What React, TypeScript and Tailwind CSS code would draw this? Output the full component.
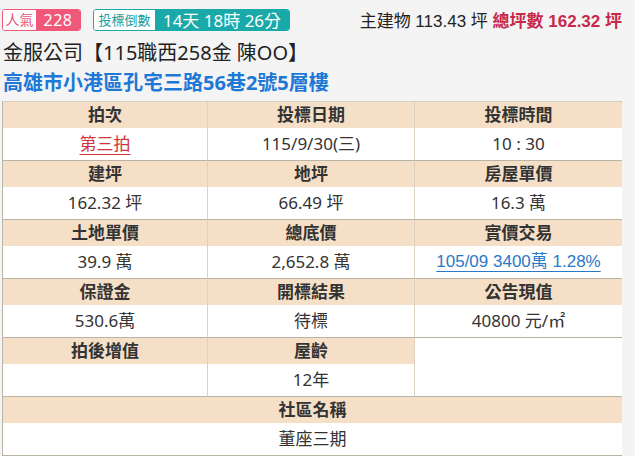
import React from "react";

const F = { fontFamily: '"Noto Sans", "Noto Sans CJK TC", sans-serif' };
const A = { fontFamily: '"Liberation Sans", "Noto Sans CJK TC", sans-serif' };

function H({ children, cls = "" }: { children?: React.ReactNode; cls?: string }) {
  return (
    <div className={"h-[26px] flex items-center justify-center bg-[#f5e0c7] border-r border-[#ddd2c2] text-[17px] font-bold text-[#333] " + cls}>
      {children}
    </div>
  );
}
function D({ children, cls = "" }: { children?: React.ReactNode; cls?: string }) {
  return (
    <div className={"h-[33px] flex items-center justify-center bg-white border-r border-b border-r-[#ddd2c2] border-b-[#b9b4a6] text-[17px] text-[#333] " + cls}>
      {children}
    </div>
  );
}

export default function App() {
  return (
    <div className="w-[635px] h-[456px] bg-[#f4f4f4] overflow-hidden" style={F}>
      <div className="flex items-center h-[22px] mt-[9px] pl-[2px] pr-[13px]">
        <div className="flex h-[22px] rounded-[3px] border border-[#f0587a] overflow-hidden">
          <div className="w-[33px] bg-white text-[#e8557a] text-[14px] flex items-center justify-center leading-none">人氣</div>
          <div className="w-[44px] bg-[#f0587a] text-white text-[16px] tracking-[0.5px] flex items-center justify-center leading-none">228</div>
        </div>
        <div className="flex h-[22px] ml-[12px] rounded-[3px] border border-[#1aa9a9] overflow-hidden">
          <div className="w-[61px] bg-white text-[#1a9e9e] text-[13px] flex items-center justify-center leading-none">投標倒數</div>
          <div className="w-[134px] bg-[#1aa9a9] text-white text-[17px] flex items-center justify-center leading-none whitespace-pre">14天 18時 26分</div>
        </div>
        <div className="ml-auto text-[17px] leading-none whitespace-pre text-[#222] mt-[2px]" style={A}>
          主建物 113.43 坪 <span className="text-[#c8284a] font-bold">總坪數 162.32 坪</span>
        </div>
      </div>
      <div className="mt-[7px] pl-[3px] text-[20px] leading-[30px] text-[#222] whitespace-pre">金服公司【115職西258金 陳OO】</div>
      <div className="pl-[3px] text-[20px] leading-[30px] text-[#1e78d6] font-bold">高雄市小港區孔宅三路56巷2號5層樓</div>
      <div className="mt-[3px] ml-[2px] w-[620px] border-l border-t border-l-[#b9b4a6] border-t-[#d8d0c2] grid grid-cols-[205px_207px_207px]" style={{ borderRight: "1px solid #a09c8c" }}>
        <H>拍次</H>
        <H>投標日期</H>
        <H cls="border-r-0">投標時間</H>
        <D><span className="text-[#d0343a] underline underline-offset-[4px] decoration-[1px]">第三拍</span></D>
        <D>115/9/30(三)</D>
        <D cls="border-r-0">10 : 30</D>

        <H>建坪</H>
        <H>地坪</H>
        <H cls="border-r-0">房屋單價</H>
        <D>162.32 坪</D>
        <D>66.49 坪</D>
        <D cls="border-r-0">16.3 萬</D>

        <H>土地單價</H>
        <H>總底價</H>
        <H cls="border-r-0">實價交易</H>
        <D>39.9 萬</D>
        <D>2,652.8 萬</D>
        <D cls="border-r-0">
          <span className="text-[#2a78c8] underline underline-offset-[4px] decoration-[1px] whitespace-pre text-[17px]" style={A}>105/09 3400萬 1.28%</span>
        </D>

        <H>保證金</H>
        <H>開標結果</H>
        <H cls="border-r-0">公告現值</H>
        <D>530.6萬</D>
        <D>待標</D>
        <D cls="border-r-0">40800 元/㎡</D>

        <H>拍後增值</H>
        <H>屋齡</H>
        <div className="row-span-2 bg-white border-b border-[#b9b4a6]"></div>
        <D></D>
        <D>12年</D>

        <H cls="col-span-3 border-r-0">社區名稱</H>
        <D cls="col-span-3 border-r-0">董座三期</D>
      </div>
    </div>
  );
}
